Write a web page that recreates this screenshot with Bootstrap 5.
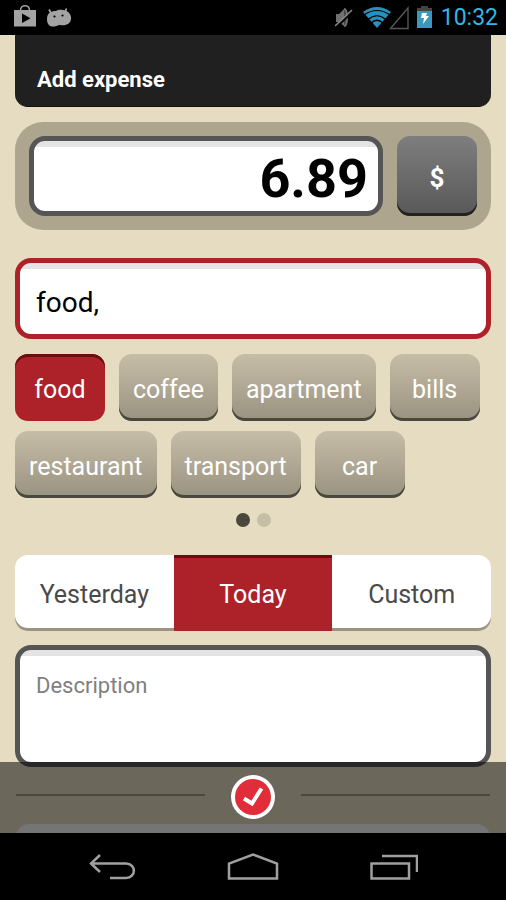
<!DOCTYPE html>
<html lang="en">
<head>
<meta charset="utf-8">
<meta name="viewport" content="width=device-width, initial-scale=1">
<title>Add expense</title>
<link href="https://cdn.jsdelivr.net/npm/bootstrap@5.3.0/dist/css/bootstrap.min.css" rel="stylesheet">
<style>
body { font-family: Roboto, "Noto Sans", sans-serif; background: #e6dcc2; color: #000; }
.status-bar { height: 35px; background: #000; padding: 0 8px 0 14px; }
.clock { color: #33b5e5; font-size: 23px; line-height: 37px; }
.screen { padding: 0 15px; }
.title-bar { background: #202020; border-radius: 0 0 13px 13px; height: 72px; padding: 0 22px 12px; border-bottom: 1px solid #111; }
.title-bar h1 { font-size: 22px; line-height: 28px; font-weight: 700; }
.amount-panel { background: #aea58f; border-radius: 28px; padding: 14px; margin-top: 15px; gap: 14px; }
.field { border: 5px solid #555; border-radius: 16px; background: linear-gradient(#e4e4e4 6px, #fff 6px); color: #000; padding: 6px 16px 0; outline: 0; resize: none; min-width: 0; }
.amount { height: 80px; font-size: 54px; font-weight: 700; padding: 4px 10px 0; }
.currency { width: 80px; height: 80px; border-radius: 13px; background: linear-gradient(#7e7e7e, #585858); box-shadow: inset 0 -3px 0 #222; color: #fff; font-size: 26px; font-weight: 700; }
.category { height: 81px; font-size: 28px; border-color: #ad2229; margin-top: 28px; padding-top: 8px; }
.tags { gap: 10px 14px; margin-top: 15px; }
.tag { height: 67px; min-width: 90px; padding: 4px 14px 0; border-radius: 13px; color: #fff; font-size: 25px; background: linear-gradient(#c6bda7, #999280); box-shadow: inset 0 -3px 0 #4a473d; }
.tag-on, .tag-on:hover { background: #ad2229; box-shadow: inset 0 3px 0 #6a0c10; }
.pager { gap: 7px; margin-top: 15px; }
.dot { width: 14px; height: 14px; border-radius: 50%; background: #c7bea8; }
.dot-on { background: #4a473d; }
.days { margin-top: 28px; }
.day { height: 76px; background: #fff; color: #4a4a4a; font-size: 25px; box-shadow: inset 0 -3px 0 #9b9480; padding-top: 4px; }
.day:first-child { border-radius: 13px 0 0 13px; }
.day:last-child { border-radius: 0 13px 13px 0; }
.day-on { background: #ad2229; color: #fff; box-shadow: inset 0 3px 0 #6a0c10; }
.description { height: 122px; font-size: 22px; line-height: 28px; margin-top: 14px; padding: 22px 16px; }
.description::placeholder { color: #808080; opacity: 1; }
.action-bar { height: 71px; background: rgba(0, 0, 0, .53); padding: 13px 16px 0; overflow: hidden; }
.action-row { gap: 26px; height: 44px; }
.rule { height: 2px; background: #4b483d; margin-bottom: 4px; }
.confirm svg, .soft-keys svg, .status-bar svg { display: block; }
.next-card { height: 28px; margin-top: 5px; border-radius: 13px; background: #757575; }
.soft-keys { height: 67px; background: #000; padding: 0 43px; }
.soft-keys button { padding-top: 2px; }
</style>
<script src="https://cdn.jsdelivr.net/npm/bootstrap@5.3.0/dist/js/bootstrap.bundle.min.js"></script>
</head>
<body class="vh-100 d-flex flex-column overflow-hidden">
<header class="status-bar d-flex align-items-center flex-shrink-0">
  <svg width="60" height="35" viewBox="0 0 60 35" fill="#a3a3a3" aria-hidden="true">
    <path d="M0 10H22V26.500H0z"/><path d="M6.500 10.500C6.500 4 15.500 4 15.500 10.500" fill="none" stroke="#a3a3a3" stroke-width="1.500"/>
    <path d="M8 13.500V23l8.500-4.700z" fill="#000"/>
    <path d="M33 19C33 13 37 11 42 11C44 9.500 48 9.300 51 10.500C55 11.500 57.500 15 57 19C56.500 24 52 26 46 25C43.500 25 43 27 38 26.500C34.500 26 33 23 33 19z"/>
    <path d="M37 13L35 9.500M51 12L52.500 8.500" stroke="#a3a3a3" stroke-width="1.800"/>
    <circle cx="40.500" cy="16.500" r="1.100" fill="#000"/><circle cx="48.500" cy="15.500" r="1.100" fill="#000"/>
  </svg>
  <svg class="ms-auto" width="98" height="35" viewBox="0 0 98 35" aria-hidden="true">
    <path d="M1 14h3l5-5v17l-5-4H1z" fill="#707070"/><path d="M9 9C13 9 13 26 9 26" fill="#444" stroke="#707070" stroke-width="2"/>
    <path d="M1 27.500L18 11.500" stroke="#000" stroke-width="2"/><path d="M0 26L17 10" stroke="#888" stroke-width="1.500"/>
    <path d="M28 12Q42 2 56 12L42 28z" fill="#2a8fba"/>
    <path d="M29 15Q42 6 55 15M33 19.500Q42 12 51 19.500M36 23Q42 17.500 48 23" fill="none" stroke="#000" stroke-width="1.200"/>
    <path d="M55.500 28.500L73 8V28.500z" fill="none" stroke="#555" stroke-width="1.400"/>
    <path d="M82 11V8h4V6h7v2h4v3z" fill="#444"/><path d="M82 11h15v17H82z" fill="#3b98bd"/><path d="M87 13h5l-1 3h3l-6 8 1-6h-3z" fill="#fff"/>
  </svg>
  <time class="clock ms-2">10:32</time>
</header>

<main class="screen flex-grow-1 overflow-hidden">
  <div class="title-bar d-flex align-items-end"><h1 class="m-0 text-white">Add expense</h1></div>
  <div class="amount-panel d-flex">
    <input class="field amount flex-grow-1 text-end" type="text" value="6.89" aria-label="Amount">
    <button class="currency btn border-0 p-0 pt-1 flex-shrink-0" type="button">$</button>
  </div>
  <input class="field category w-100 d-block" type="text" value="food," aria-label="Categories">
  <div class="tags d-flex flex-wrap">
    <button class="tag tag-on border-0" type="button">food</button>
    <button class="tag border-0" type="button">coffee</button>
    <button class="tag border-0" type="button">apartment</button>
    <button class="tag border-0" type="button">bills</button>
    <button class="tag border-0" type="button">restaurant</button>
    <button class="tag border-0" type="button">transport</button>
    <button class="tag border-0" type="button">car</button>
  </div>
  <div class="pager d-flex justify-content-center"><span class="dot dot-on"></span><span class="dot"></span></div>
  <div class="days row g-0" role="group" aria-label="Date">
    <button class="day col border-0" type="button">Yesterday</button>
    <button class="day day-on col border-0" type="button">Today</button>
    <button class="day col border-0" type="button">Custom</button>
  </div>
  <textarea class="field description w-100 d-block" placeholder="Description" aria-label="Description"></textarea>
</main>

<footer class="position-relative flex-shrink-0">
  <div class="action-bar position-absolute bottom-100 start-0 w-100">
    <div class="action-row d-flex align-items-center">
      <span class="rule flex-grow-1"></span>
      <button class="confirm btn border-0 p-0" type="button" aria-label="Save expense">
        <svg width="44" height="44" viewBox="0 0 44 44"><circle cx="22" cy="22" r="22" fill="#fff"/><circle cx="22" cy="22" r="18" fill="#e12d39"/><path d="M13 23.500L21 28.500L30.500 13.500" fill="none" stroke="#fff" stroke-width="4"/></svg>
      </button>
      <span class="rule flex-grow-1"></span>
    </div>
    <div class="next-card"></div>
  </div>
  <nav class="soft-keys d-flex align-items-center justify-content-around" aria-label="System">
    <button class="btn border-0 px-0 pb-0" type="button" aria-label="Back"><svg width="50" height="30" viewBox="0 0 50 30" fill="none" stroke="#a0a0a0" stroke-width="2.500"><path d="M12 2L3 10.500L12 19M3 10.500H38C48.500 10.500 48.500 25 38 25H22"/></svg></button>
    <button class="btn border-0 px-0 pb-0" type="button" aria-label="Home"><svg width="52" height="30" viewBox="0 0 52 30" fill="none" stroke="#a0a0a0" stroke-width="2.500"><path d="M2 25.500V10.500L26 1.500L50 10.500V25.500z"/></svg></button>
    <button class="btn border-0 px-0 pb-0" type="button" aria-label="Recent apps"><svg width="50" height="30" viewBox="0 0 50 30" fill="none" stroke="#a0a0a0" stroke-width="2.500"><path d="M3.500 10.500H41V25.500H3.500zM14 3H49V19"/></svg></button>
  </nav>
</footer>
</body>
</html>
